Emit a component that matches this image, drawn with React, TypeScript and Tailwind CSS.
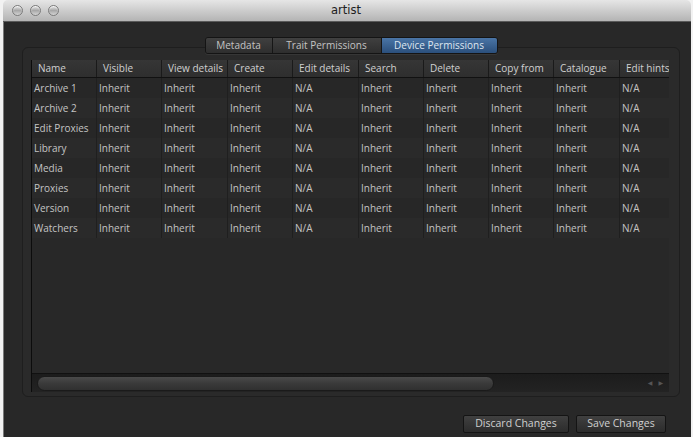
import React from "react";

const cols = ["Name", "Visible", "View details", "Create", "Edit details", "Search", "Delete", "Copy from", "Catalogue", "Edit hints"];
const names = ["Archive 1", "Archive 2", "Edit Proxies", "Library", "Media", "Proxies", "Version", "Watchers"];
const vals = ["Inherit", "Inherit", "Inherit", "N/A", "Inherit", "Inherit", "Inherit", "Inherit", "N/A"];
const W = [65, 65, 66, 65, 66, 65, 65, 65, 66, 60];

export default function App() {
  return (
    <div
      className="w-[693px] h-[437px] overflow-hidden bg-[#f2f2f2] text-[10px]"
      style={{ fontFamily: '"Open Sans", "DejaVu Sans", sans-serif' }}
    >
      <div className="ml-[3px] w-[688px] h-[437px] flex flex-col">
        {/* title bar */}
        <div className="h-[22px] rounded-t-[5px] bg-gradient-to-b from-[#e6e6e6] to-[#b4b4b4] border-b border-[#5a5a5a] flex items-center relative">
          <div className="flex gap-[7px] ml-[9px]">
            {[0, 1, 2].map((i) => (
              <div
                key={i}
                className="w-[11px] h-[11px] rounded-full border border-[#7a7a7a] bg-gradient-to-b from-[#e8e8e8] via-[#a8a8a8] to-[#d4d4d4] shadow-[inset_0_1px_1px_rgba(255,255,255,0.7)]"
              />
            ))}
          </div>
          <div className="absolute inset-0 flex items-center justify-center text-[11.5px] text-[#202020]" style={{ fontFamily: '"DejaVu Sans", sans-serif' }}>
            <span className="ml-[-2px]">artist</span>
          </div>
        </div>
        {/* body */}
        <div className="flex-1 bg-[#282828] border-l border-[#7a7a7a] flex flex-col pl-[18px] pr-[11px]">
          {/* tabs */}
          <div className="mt-[15px] h-[17px] flex justify-center relative z-10">
            <div className="flex h-[17px] rounded-[3px] border border-[#141414] overflow-hidden shadow-[0_1px_0_rgba(255,255,255,0.06)]">
              <div className="w-[67px] flex items-center justify-center bg-gradient-to-b from-[#404040] to-[#2e2e2e] text-[#c4c4c4] border-r border-[#161616]">
                Metadata
              </div>
              <div className="w-[109px] flex items-center justify-center bg-gradient-to-b from-[#404040] to-[#2e2e2e] text-[#c4c4c4] border-r border-[#161616]">
                Trait Permissions
              </div>
              <div className="w-[115px] flex items-center justify-center bg-gradient-to-b from-[#4a75a6] to-[#2b4f7c] text-[#dfe6f0]">
                Device Permissions
              </div>
            </div>
          </div>
          {/* group box */}
          <div className="-mt-[7px] h-[350px] rounded-[6px] border border-[#1e1e1e] bg-[#2a2a2a] pt-[12px] pl-[8px] pr-[10px] pb-[4px] flex flex-col">
            <div className="flex-1 flex flex-col border-l border-[#0c0c0c] bg-[#282828] overflow-hidden">
              {/* header */}
              <div className="flex h-[18px] bg-gradient-to-b from-[#363636] to-[#2e2e2e] border-b border-[#111] shrink-0">
                {cols.map((c, i) => (
                  <div
                    key={c}
                    className="shrink-0 flex items-center pl-[6px] text-[#d0d0d0] border-r border-[#1a1a1a] whitespace-nowrap"
                    style={{ width: W[i] }}
                  >
                    {c}
                  </div>
                ))}
              </div>
              {/* rows */}
              <div className="flex-1 relative">
                {names.map((n, r) => (
                  <div key={n} className={`flex h-[20px] ${r % 2 === 0 ? "bg-[#272727]" : "bg-[#2a2a2a]"}`}>
                    {[n, ...vals].map((v, i) => (
                      <div
                        key={i}
                        className="shrink-0 flex items-center pl-[2px] text-[#c4c4c4] border-r border-[#1f1f1f] whitespace-nowrap"
                        style={{ width: W[i] }}
                      >
                        {v}
                      </div>
                    ))}
                  </div>
                ))}
              </div>
              {/* scrollbar */}
              <div className="h-[19px] shrink-0 flex items-center bg-gradient-to-b from-[#1c1c1c] to-[#232323] border-t border-[#111]">
                <div className="w-[5px]" />
                <div className="w-[457px] h-[15px] rounded-full bg-gradient-to-b from-[#4a4a4a] via-[#3a3a3a] to-[#303030] border border-[#1a1a1a]" />
                <div className="flex-1" />
                <div className="flex gap-[6px] mr-[6px] text-[#555] text-[6px]">
                  <span>◀</span>
                  <span>▶</span>
                </div>
              </div>
            </div>
          </div>
          {/* buttons */}
          <div className="mt-[18px] flex justify-end gap-[7px] pr-[14px]">
            <div className="w-[106px] h-[18px] rounded-[2px] border border-[#141414] bg-gradient-to-b from-[#404040] to-[#2c2c2c] text-[#d0d0d0] text-[10.5px] flex items-center justify-center">
              Discard Changes
            </div>
            <div className="w-[90px] h-[18px] rounded-[2px] border border-[#141414] bg-gradient-to-b from-[#404040] to-[#2c2c2c] text-[#d0d0d0] text-[10.5px] flex items-center justify-center">
              Save Changes
            </div>
          </div>
        </div>
      </div>
    </div>
  );
}
